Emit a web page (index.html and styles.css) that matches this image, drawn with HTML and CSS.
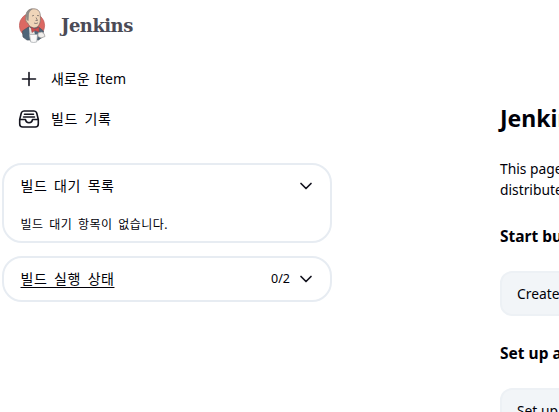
FILE: index.html
```html
<!DOCTYPE html>
<html lang="ko">
<head>
<meta charset="utf-8">
<title>Jenkins</title>
<link rel="stylesheet" href="styles.css">
</head>
<body>
<header class="header">
  <svg class="logo" viewBox="0 0 27 35">
    <ellipse cx="13" cy="17.500" rx="12.600" ry="12.500" fill="#dc6862" stroke="#c2625f" stroke-width=".8"/>
    <path d="M3.500 23l6-4 10 0 5 4-1 6-4 3H8l-4-3z" fill="#4f6578" stroke="#4c5560" stroke-width=".7"/>
    <path d="M10 19l5 3 2 10h-6z" fill="#e6e3df"/>
    <path d="M7 7C8 2 11 .7 15 .8c4.500.2 6.500 3.200 6.300 8 .5 5-.8 10.200-5.300 11-3 .5-6-1.500-7-4.500C6.500 14.500 6 10 7 7z" fill="#efd5b9" stroke="#7d706b" stroke-width=".7"/>
    <path d="M7 8C7 3 10 .6 14 .8 11 2.500 9.500 5 9.800 8l-.3 5-2-1z" fill="#8f8b87"/>
    <path d="M13 8l2-.7M18 7.500l2 .2M15 15q2 1.200 4-.2M17 9.500l1.500 3h-2" fill="none" stroke="#786e69" stroke-width=".8"/>
    <path d="M12 19l4 2 4-2v5l-4-1.500-3 2z" fill="#cd4b4b" stroke="#964448" stroke-width=".5"/>
    <path d="M10.500 26.500h8l-.8 7.500q-3 1-6 0z" fill="#f8f8f8" stroke="#a4a7ab" stroke-width=".7"/>
    <path d="M19 25q4-2 6 .5l1 3-4 1.500-3-1.500z" fill="#f1eeeb" stroke="#969696" stroke-width=".7"/>
  </svg>
  <span class="brand">Jenkins</span>
</header>
<div class="page">
  <aside class="side">
    <nav class="tasks">
      <a class="task">
        <svg class="icon" viewBox="0 0 22 22"><path d="M11 4.500v13M4.500 11h13"/></svg>
        <span class="new-item">새로운 Item</span>
      </a>
      <a class="task">
        <svg class="icon" viewBox="0 0 22 22"><path d="M1.700 11.500L3.300 5q.6-2 2.700-2h10q2.100 0 2.700 2l1.600 6.500v4.500q0 3-3 3H4.700q-3 0-3-3zM1.700 11.500h5.800q.3 3.200 3.500 3.200t3.500-3.200h5.800M6.500 6.200h9M5.500 9h11"/></svg>
        <span class="history">빌드 기록</span>
      </a>
    </nav>
    <section class="pane queue">
      <div class="pane-head">
        <span class="pane-title">빌드 대기 목록</span>
        <svg class="chevron" viewBox="0 0 14 14"><path d="M2 4.500l5 5 5-5"/></svg>
      </div>
      <p class="empty">빌드 대기 항목이 없습니다.</p>
    </section>
    <section class="pane executors">
      <div class="pane-head">
        <a class="pane-title linked">빌드 실행 상태</a>
        <span class="count">0/2</span>
        <svg class="chevron" viewBox="0 0 14 14"><path d="M2 4.500l5 5 5-5"/></svg>
      </div>
    </section>
  </aside>
  <main class="main">
    <h1>Jenkins</h1>
    <p class="intro">This page<br>distributed</p>
    <h2>Start building</h2>
    <a class="card">Create a job</a>
    <h2>Set up a build</h2>
    <a class="card">Set up an agent</a>
  </main>
</div>
</body>
</html>
```
FILE: styles.css
```css
* { box-sizing: border-box; }
body {
  margin: 0;
  height: 412px;
  overflow: hidden;
  background: #fff;
  color: #000008;
  font: 14px/20px "Noto Sans", "Noto Sans CJK KR", sans-serif;
}
h1, h2, p { margin: 0; }
.header { display: flex; align-items: center; height: 51px; margin-bottom: 1px; padding-left: 19px; }
.logo { width: 27px; height: 35px; }
.brand {
  margin-left: 15px;
  padding-top: 1px;
  font: bold 18px/24px "DejaVu Serif", serif;
  letter-spacing: -.55px;
  color: #4b4b56;
}
.page { display: flex; width: 900px; }
.side { width: 332px; padding-left: 2px; }
.tasks { padding: 6px 0 25px 16px; }
.task { display: flex; align-items: center; height: 40px; gap: 11px; }
.icon { width: 22px; height: 22px; fill: none; stroke: #14141f; stroke-width: 1.6; stroke-linecap: round; stroke-linejoin: round; }
.task, .pane-title, .empty { white-space: nowrap; }
.task { padding-top: 1px; }
.new-item { word-spacing: 2px; }
.history, .pane-title { letter-spacing: .5px; word-spacing: 2.7px; }
.pane { border: 2px solid #e7ecf2; border-radius: 20px; padding: 0 17px 0 16.5px; }
.pane-head { display: flex; align-items: center; height: 41px; }
.pane-title { margin-right: auto; }
.linked { text-decoration: underline; text-underline-offset: 3px; text-decoration-thickness: 1px; }
.chevron { width: 14px; height: 14px; fill: none; stroke: #14141f; stroke-width: 1.7; stroke-linecap: round; stroke-linejoin: round; }
.count { margin-right: 9px; font-size: 12.5px; }
.queue { height: 80px; margin-bottom: 13px; }
.executors { height: 46px; }
.empty { margin-top: 9px; font-size: 12px; letter-spacing: .5px; word-spacing: 2px; }
.main { margin-left: 168px; padding-top: 50px; width: 400px; }
h1 { font-size: 23px; line-height: 32px; margin-bottom: 24px; }
.intro { line-height: 21px; margin-bottom: 25px; }
h2 { font-size: 15.5px; line-height: 22px; }
.card {
  display: flex;
  align-items: center;
  height: 45px;
  margin: 24px 0 26px;
  padding-left: 15px;
  border: 2px solid #edf1f5;
  border-radius: 12px;
  background: #f2f5f8;
}
.intro, .card { font-size: 13.8px; }
```
